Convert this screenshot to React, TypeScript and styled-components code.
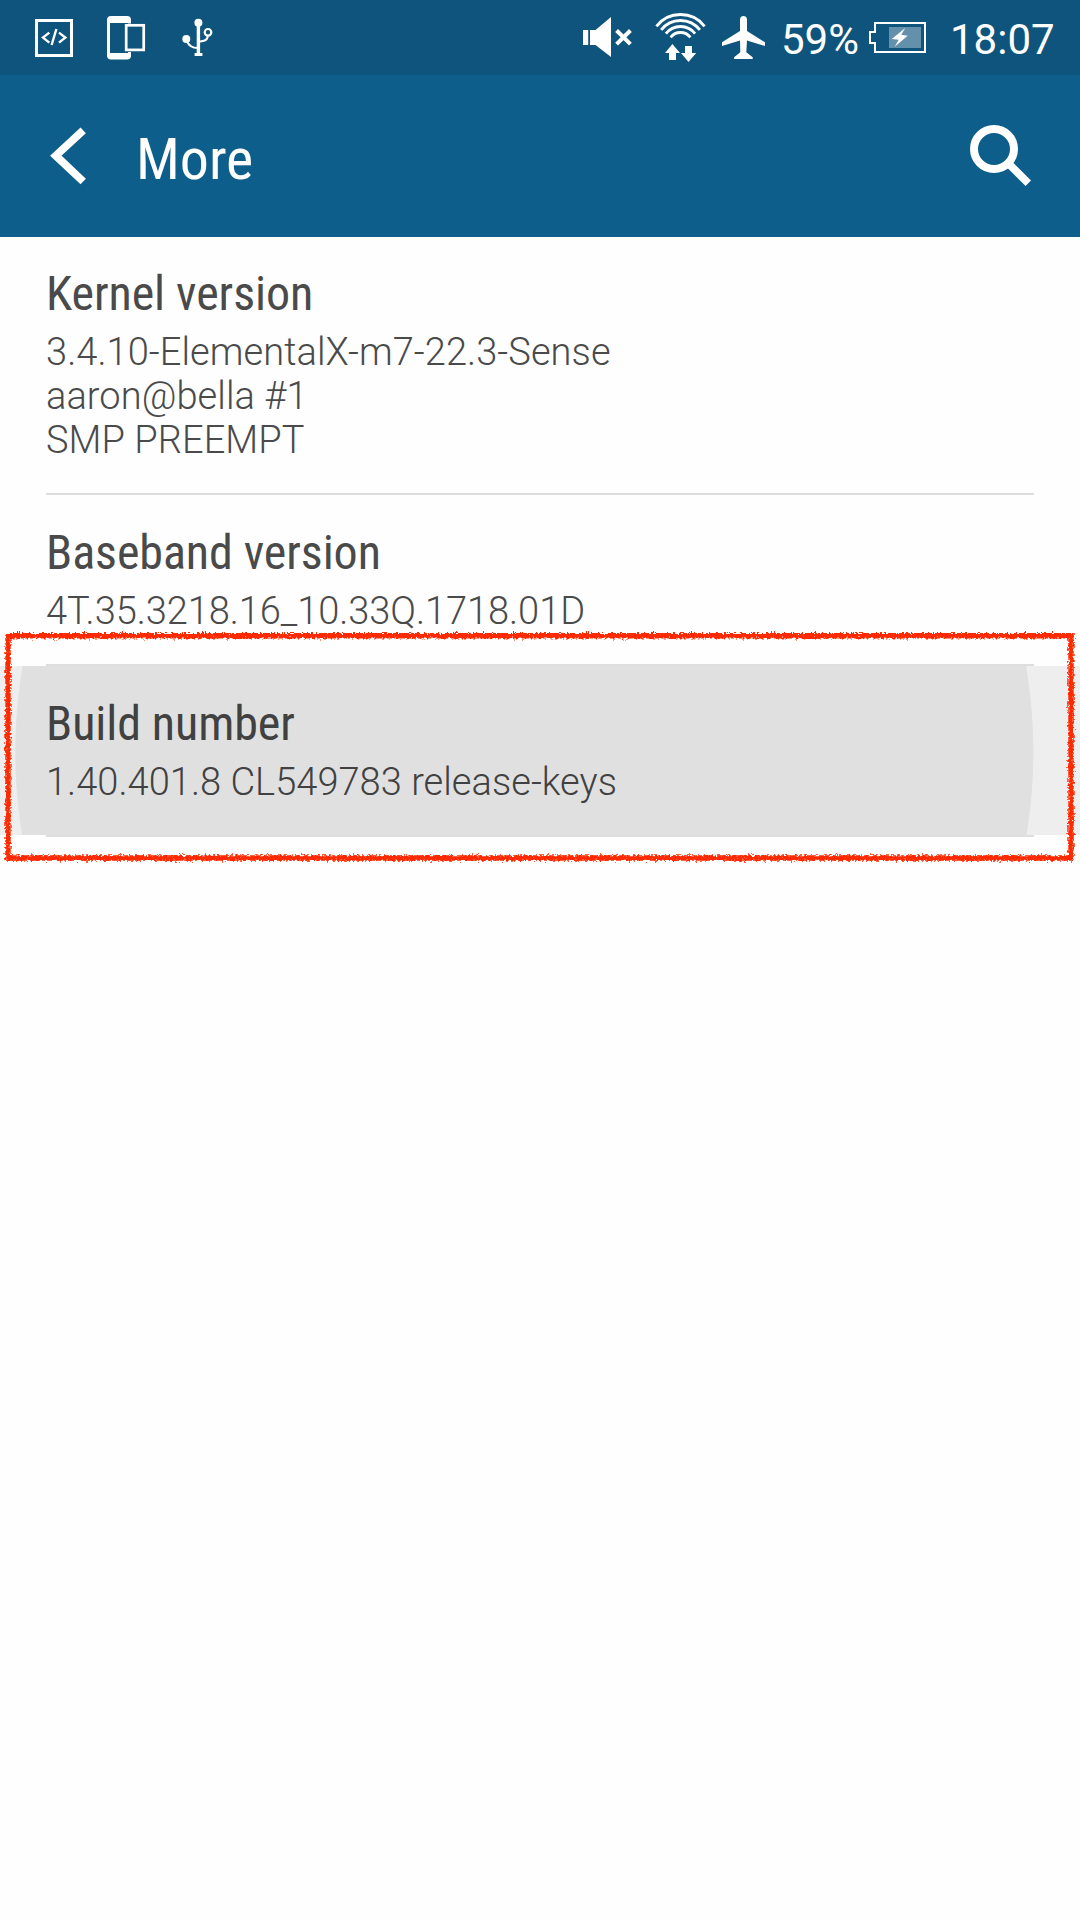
import React from "react";
import styled, { createGlobalStyle } from "styled-components";

const GlobalStyle = createGlobalStyle`
  * { box-sizing: border-box; }
  body { margin: 0; background: #fefefe; }
`;

const Screen = styled.div`
  display: flex;
  flex-direction: column;
  width: 1080px;
  height: 1920px;
  overflow: hidden;
  background: #fefefe;
  font-family: Roboto, "Liberation Sans", sans-serif;
`;

const StatusBar = styled.header`
  display: flex;
  align-items: center;
  flex: none;
  height: 75px;
  padding: 0 26px 0 35px;
  background: #0f547c;
  color: #fff;
`;

const Icon = styled.svg<{ $gap?: number }>`
  display: block;
  flex: none;
  margin-left: ${(p) => p.$gap ?? 0}px;
`;

const Spacer = styled.div`
  flex: 1;
`;

const StatusText = styled.span<{ $width: number; $gap: number }>`
  flex: none;
  width: ${(p) => p.$width}px;
  margin-left: ${(p) => p.$gap}px;
  padding-top: 5px;
  font-size: 42px;
  line-height: 50px;
  white-space: nowrap;
`;

const AppBar = styled.div`
  display: flex;
  align-items: center;
  flex: none;
  height: 162px;
  padding: 0 49px 0 50px;
  background: #0d5e8a;
  color: #fff;
`;

const AppTitle = styled.h1`
  flex: 1;
  margin: 5px 0 0 49px;
  font-family: "Roboto Condensed", Roboto, sans-serif;
  font-stretch: 75%;
  font-size: 58px;
  line-height: 68px;
  font-weight: 400;
`;

const List = styled.main`
  position: relative;
  display: flex;
  flex-direction: column;
`;

const Row = styled.section<{ $height: number; $pressed?: boolean }>`
  height: ${(p) => p.$height}px;
  padding: 29px 46px 0;
  color: ${(p) => (p.$pressed ? "#414141" : "#4a4a4a")};
  background: ${(p) =>
    p.$pressed
      ? "radial-gradient(circle at 524.3px 86px, #e0e0e0 508.5px, #eeeeee 509.5px)"
      : "transparent"};

  &:first-child {
    padding-top: 28px;
  }
`;

const RowTitle = styled.h2`
  margin: 0;
  font-family: "Roboto Condensed", Roboto, sans-serif;
  font-stretch: 75%;
  font-size: 48px;
  line-height: 58px;
  font-weight: 400;
  letter-spacing: -0.07px;
`;

const RowText = styled.p<{ $tracking: number }>`
  margin: 7px 0 0;
  font-size: 38px;
  line-height: 44px;
  font-weight: 300;
  letter-spacing: ${(p) => p.$tracking}px;
  white-space: pre-line;
`;

const Divider = styled.div`
  height: 2px;
  margin: 0 46px;
  background: #dedede;
`;

const Marker = styled.svg`
  position: absolute;
  left: 0;
  top: 388px;
  pointer-events: none;
`;

const rows = [
  {
    title: "Kernel version",
    text: "3.4.10-ElementalX-m7-22.3-Sense\naaron@bella #1\nSMP PREEMPT",
    height: 256,
    tracking: 0.06,
  },
  {
    title: "Baseband version",
    text: "4T.35.3218.16_10.33Q.1718.01D",
    height: 169,
    tracking: -0.06,
  },
  {
    title: "Build number",
    text: "1.40.401.8 CL549783 release-keys",
    height: 169,
    tracking: 0.03,
    pressed: true,
  },
];

const arc = (r: number) => {
  const dx = r * Math.sin(0.91);
  const dy = r * Math.cos(0.91);
  return `M${680.5 - dx} ${45 - dy}A${r} ${r} 0 0 1 ${680.5 + dx} ${45 - dy}`;
};

export default function App() {
  return (
    <Screen>
      <GlobalStyle />
      <StatusBar>
        <Icon width="38" height="75" viewBox="35 0 38 75" fill="none" stroke="#fff">
          <rect x="36.5" y="20.5" width="35" height="35" strokeWidth="3" />
          <path d="M49.3 32.6L43 37.6l6.3 5M59 32.6l6.3 5-6.3 5M56.4 29L51.6 45" strokeWidth="2.4" />
        </Icon>
        <Icon $gap={34} width="39" height="75" viewBox="107 0 39 75">
          <rect x="107" y="16" width="24" height="43.6" rx="4" fill="#fff" />
          <rect x="110" y="23" width="18" height="30" fill="#0f547c" />
          <rect x="124" y="23.5" width="22" height="28.5" fill="#0f547c" />
          <rect x="126.2" y="25.3" width="17.5" height="24.6" fill="none" stroke="#fff" strokeWidth="2.7" />
        </Icon>
        <Icon $gap={35} width="33" height="75" viewBox="181 0 33 75" fill="none" stroke="#fff">
          <circle cx="198.4" cy="22.7" r="4" fill="#fff" stroke="none" />
          <circle cx="186.3" cy="39" r="4" fill="#fff" stroke="none" />
          <rect x="194.6" y="53" width="7.8" height="3" fill="#fff" stroke="none" />
          <path d="M198.4 22v32" strokeWidth="3.4" />
          <path d="M187 41c1.5 4.5 5 7 11 7M207.8 36.2c-.3 3.3-3.4 5.3-8 5.3" strokeWidth="2.1" />
          <circle cx="208" cy="32.3" r="3.3" strokeWidth="2.2" />
        </Icon>
        <Spacer />
        <Icon width="49" height="75" viewBox="583 0 49 75" fill="#fff">
          <path d="M583 30h5.2v15H583zM590 30h5.5L611 17v40L595.5 45H590z" />
          <path d="M616.600 30.500l13.800 13.600m0-13.600l-13.800 13.600" stroke="#fff" strokeWidth="4" />
        </Icon>
        <Icon $gap={22} width="53" height="75" viewBox="654 0 53 75" fill="none" stroke="#fff" strokeWidth="2.8">
          {[30.5, 24.5, 18.5, 12.5].map((r) => (
            <path key={r} d={arc(r)} />
          ))}
          <path
            fill="#fff"
            stroke="none"
            d="M672.4 44l7.6 9h-4v7h-7v-7h-4zM685 46h7v7h4.200l-7.700 9-7.500-9h4z"
          />
        </Icon>
        <Icon $gap={15} width="43" height="75" viewBox="722 0 43 75" fill="#fff">
          <path d="M740 31V19.500c0-4.600 7-4.600 7 0V31l18 11.300V46l-18-5.500-.7 11.800 6.400 5v1.700h-18.600v-1.700l6.200-5L740 40.500 722 46v-3.700z" />
        </Icon>
        <StatusText $width={79} $gap={16}>59%</StatusText>
        <Icon $gap={9} width="57" height="75" viewBox="869 0 57 75">
          <path d="M875 23h50v29h-50v-9h-5V32h5z" fill="none" stroke="#fff" strokeWidth="2" />
          <rect x="889" y="27" width="32" height="21" fill="#6391ac" />
          <path d="M905.3 28L891.7 39l7 .8-4 7 13-11-6.500-1z" fill="#fff" />
        </Icon>
        <StatusText $width={104} $gap={24}>18:07</StatusText>
      </StatusBar>
      <AppBar>
        <Icon width="37" height="162" viewBox="50 75 37 162" fill="none" stroke="#fff">
          <path d="M83.200 130.300L55.800 155.700l27.400 25.800" strokeWidth="7.800" />
        </Icon>
        <AppTitle>More</AppTitle>
        <Icon width="61" height="162" viewBox="970 75 61 162" fill="none" stroke="#fff">
          <circle cx="994" cy="149" r="20" strokeWidth="8" />
          <path d="M1009.500 164.500l18.800 18.800" strokeWidth="7.700" />
        </Icon>
      </AppBar>
      <List>
        {rows.map((row) => (
          <React.Fragment key={row.title}>
            <Row $height={row.height} $pressed={row.pressed}>
              <RowTitle>{row.title}</RowTitle>
              <RowText $tracking={row.tracking}>{row.text}</RowText>
            </Row>
            <Divider />
          </React.Fragment>
        ))}
        <Marker width="1080" height="245" viewBox="0 625 1080 245">
          <filter
            id="crayon"
            x="0"
            y="625"
            width="1080"
            height="245"
            filterUnits="userSpaceOnUse"
            colorInterpolationFilters="sRGB"
          >
            <feTurbulence type="fractalNoise" baseFrequency="0.45" numOctaves="2" seed="4" />
            <feDisplacementMap in="SourceGraphic" scale="6" xChannelSelector="R" yChannelSelector="G" />
          </filter>
          <path
            d="M8 635.700H1071V858H8Z"
            fill="none"
            stroke="#ff2a00"
            strokeWidth="5.400"
            filter="url(#crayon)"
          />
        </Marker>
      </List>
    </Screen>
  );
}
